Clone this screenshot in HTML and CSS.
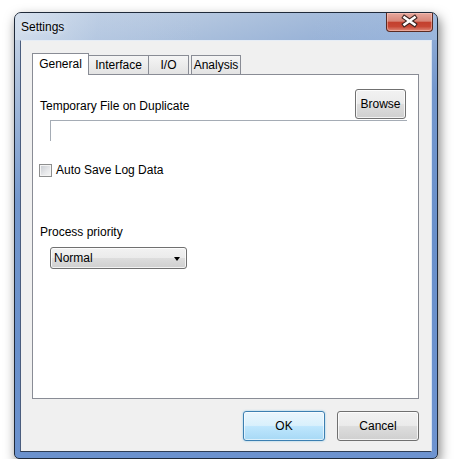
FILE: index.html
```html
<!DOCTYPE html>
<html lang="en">

<head>
    <meta charset="UTF-8">
    <meta name="viewport" content="width=device-width, initial-scale=1.0">
    <title>Settings</title>
    <link rel="stylesheet" href="styles.css">
</head>

<body>
    <div class="window">
        <div class="titlebar">
            <span class="title">Settings</span>
            <div class="close-btn">
                <svg width="47" height="19" viewBox="0 0 47 19">
                    <path d="M18.5 5.5 L28.5 12.5 M28.5 5.5 L18.5 12.5" stroke="#3a2320" stroke-width="4.6" stroke-linecap="square" fill="none"/>
                    <path d="M18.5 5.5 L28.5 12.5 M28.5 5.5 L18.5 12.5" stroke="#ffffff" stroke-width="2.6" stroke-linecap="square" fill="none"/>
                </svg>
            </div>
        </div>
        <div class="client">
            <div class="tabs">
                <div class="tab active">General</div>
                <div class="tab tab-interface">Interface</div>
                <div class="tab tab-io">I/O</div>
                <div class="tab tab-analysis">Analysis</div>
            </div>
            <div class="panel">
                <div class="file-row">
                    <span class="label">Temporary File on Duplicate</span>
                    <button class="btn btn-browse">Browse</button>
                </div>
                <div class="textbox"></div>
                <label class="check-row">
                    <span class="checkbox"></span>
                    <span>Auto Save Log Data</span>
                </label>
                <div class="label priority-label">Process priority</div>
                <div class="combo">
                    <span>Normal</span>
                    <span class="combo-arrow"></span>
                </div>
            </div>
            <div class="actions">
                <button class="btn btn-default">OK</button>
                <button class="btn btn-cancel">Cancel</button>
            </div>
        </div>
    </div>
</body>

</html>
```

FILE: styles.css
```css
body {
    margin: 0;
    padding: 12px 0 0 14px;
    background: #ffffff;
    font-family: "Liberation Sans", Arial, sans-serif;
    font-size: 12px;
    color: #000000;
}

.window {
    position: relative;
    box-sizing: border-box;
    width: 424px;
    height: 447px;
    padding: 0 5px 6px 5px;
    border: 1px solid #1f2a3a;
    border-radius: 7px 7px 5px 5px;
    background: linear-gradient(165deg, #cdd9e8 0%, #a7bddb 14%, #7397cd 34%, #6990cb 60%, #6d93d0 100%);
    box-shadow: 2px 5px 12px rgba(0, 0, 0, 0.5);
}

.titlebar {
    height: 27px;
    display: flex;
    align-items: center;
    background: linear-gradient(100deg, rgba(220, 230, 242, 0.6) 0%, rgba(180, 200, 228, 0.3) 20%, rgba(107, 143, 198, 0) 45%, rgba(107, 143, 198, 0) 70%, rgba(170, 195, 228, 0.5) 100%);
    margin: 0 -5px;
    padding: 0 5px;
    border-radius: 6px 6px 0 0;
}

.title {
    padding-left: 1px;
    font-size: 12px;
    color: #000000;
    text-shadow: 0 0 6px rgba(255, 255, 255, 0.9);
}

.close-btn {
    position: absolute;
    top: 0;
    right: 4px;
    width: 47px;
    height: 19px;
    box-sizing: border-box;
    border: 1px solid #5a2a22;
    border-top: none;
    border-radius: 0 0 4px 4px;
    background: linear-gradient(#e6a89e 0%, #d88678 45%, #c3402e 52%, #c74735 75%, #de8a79 100%);
    box-shadow: inset 0 0 0 1px rgba(255, 210, 200, 0.45);
}

.close-btn svg {
    display: block;
    margin: -1px 0 0 -1px;
}

.client {
    box-sizing: border-box;
    height: 412px;
    padding: 12px 12px 0 11px;
    background: #f0f0f0;
    border: 1px solid;
    border-color: #e6edf6 #d6e2f1 #2e3d55 #4a5d7e;
}

.tabs {
    display: flex;
    align-items: flex-end;
    height: 22px;
}

.tab {
    position: relative;
    box-sizing: border-box;
    height: 19px;
    margin-bottom: 1px;
    padding-top: 2px;
    text-align: center;
    border: 1px solid #898c95;
    border-bottom: none;
    background: linear-gradient(#f5f5f5, #e3e3e3);
}

.tab.active {
    z-index: 1;
    width: 57px;
    height: 22px;
    margin-bottom: 0;
    padding-top: 3px;
    background: #ffffff;
}

.tab-interface {
    width: 61px;
    margin-left: -1px;
}

.tab-io {
    width: 41px;
    margin-left: -1px;
}

.tab-analysis {
    width: 50px;
    margin-left: 2px;
}

.panel {
    box-sizing: border-box;
    height: 325px;
    margin-top: -1px;
    border: 1px solid #898c95;
    background: #ffffff;
}

.label {
    line-height: 14px;
}

.file-row {
    display: flex;
    justify-content: space-between;
    align-items: center;
    margin-top: 14px;
    padding: 0 12px 0 7px;
}

.file-row .label {
    padding-top: 3px;
}

.btn {
    box-sizing: border-box;
    height: 30px;
    padding: 0;
    font-family: "Liberation Sans", Arial, sans-serif;
    font-size: 12px;
    color: #000000;
    border: 1px solid #707070;
    border-radius: 3px;
    background: linear-gradient(#f2f2f2 0%, #ebebeb 48%, #dddddd 52%, #cfcfcf 100%);
    box-shadow: inset 0 0 0 1px rgba(255, 255, 255, 0.75);
}

.btn-browse {
    width: 51px;
}

.textbox {
    height: 20px;
    margin: 1px 11px 0 17px;
    border-top: 1px solid #a5acb5;
    border-left: 1px solid #a5acb5;
}

.check-row {
    display: flex;
    align-items: center;
    gap: 4px;
    height: 14px;
    margin: 22px 0 0 6px;
}

.checkbox {
    box-sizing: border-box;
    width: 13px;
    height: 13px;
    border: 1px solid #8e8f8f;
    background: linear-gradient(135deg, #c6cad0 0%, #e8e9eb 60%, #f6f6f6 100%);
    box-shadow: inset 0 0 0 1px #f4f4f4;
}

.priority-label {
    margin-top: 48px;
    padding-left: 7px;
}

.combo {
    box-sizing: border-box;
    display: flex;
    justify-content: space-between;
    align-items: center;
    width: 137px;
    height: 22px;
    margin: 8px 0 0 17px;
    padding: 0 6px 0 3px;
    border: 1px solid #707070;
    border-radius: 3px;
    background: linear-gradient(#f2f2f2 0%, #ebebeb 48%, #dddddd 52%, #cfcfcf 100%);
    box-shadow: inset 0 0 0 1px rgba(255, 255, 255, 0.75);
}

.combo-arrow {
    width: 0;
    height: 0;
    margin-top: 2px;
    border-left: 3.5px solid transparent;
    border-right: 3.5px solid transparent;
    border-top: 4px solid #000000;
}

.actions {
    display: flex;
    justify-content: flex-end;
    gap: 12px;
    margin-top: 12px;
}

.btn-default {
    width: 82px;
    border-color: #3c7fb1;
    background: linear-gradient(#eaf6fd 0%, #d9f0fc 48%, #bee6fd 52%, #a7d9f5 100%);
    box-shadow: inset 0 0 0 1px rgba(255, 255, 255, 0.6), 0 0 2px rgba(60, 170, 230, 0.6);
}

.btn-cancel {
    width: 82px;
}
```
